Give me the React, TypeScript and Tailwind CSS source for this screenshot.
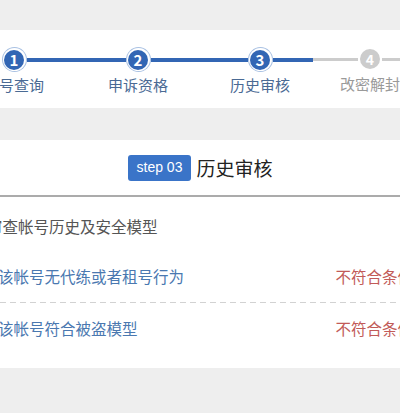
import type { ReactNode } from 'react';

const font = { fontFamily: '"Noto Sans CJK SC", "Noto Sans", sans-serif' };

type Step = { n: number; label: string; done: boolean };

const steps: Step[] = [
  { n: 1, label: '帐号查询', done: true },
  { n: 2, label: '申诉资格', done: true },
  { n: 3, label: '历史审核', done: true },
  { n: 4, label: '改密解封', done: false },
];

function Dot({ step }: { step: Step }) {
  if (!step.done) {
    return (
      <div className="w-[24px] h-[24px] flex items-center justify-center shrink-0">
        <div className="w-[20px] h-[20px] rounded-full bg-[#cccccc] text-white text-[14px] font-bold flex items-center justify-center leading-none">
          {step.n}
        </div>
      </div>
    );
  }
  return (
    <div className="w-[25px] h-[25px] rounded-full bg-[#a9c1e3] flex items-center justify-center shrink-0">
      <div className="w-[23px] h-[23px] rounded-full bg-white flex items-center justify-center">
        <div className="w-[20px] h-[20px] rounded-full bg-[#3266b4] text-white text-[15px] font-bold flex items-center justify-center leading-none">
          {step.n}
        </div>
      </div>
    </div>
  );
}

function Line({ color, className = '' }: { color: 'blue' | 'gray' | 'none'; className?: string }) {
  const c =
    color === 'blue' ? 'h-[4px] bg-[#3266b4]' : color === 'gray' ? 'h-[3px] bg-[#cccccc]' : 'h-[4px]';
  return <div className={`${c} ${className}`} />;
}

function StepCol({ step, width, left, right }: { step: Step; width: string; left: ReactNode; right: ReactNode }) {
  return (
    <div className={`${width} shrink-0 flex flex-col items-center`}>
      <div className="w-full flex items-center">
        <div className="flex-1 flex items-center">{left}</div>
        <Dot step={step} />
        <div className="flex-1 flex items-center">{right}</div>
      </div>
      <div
        className={`mt-[5px] text-[15px] leading-none whitespace-nowrap ${
          step.done ? 'text-[#4a6a94]' : 'text-[#9a9a9a]'
        }`}
      >
        {step.label}
      </div>
    </div>
  );
}

function Row({ text }: { text: string }) {
  return (
    <div className="h-[51px] ml-[-2px] w-[415px] flex items-center text-[15.5px] whitespace-nowrap">
      <span className="text-[#4a78b0]">{text}</span>
      <span className="ml-auto text-[#c25b58]">不符合条件</span>
    </div>
  );
}

export default function App() {
  return (
    <div className="w-[400px] h-[413px] bg-[#eeeeee] overflow-hidden" style={font}>
      <div className="h-[30px]" />

      <div className="h-[78px] bg-white overflow-hidden pt-[17px]">
        <div className="ml-[-48px] flex">
          <StepCol step={steps[0]} width="w-[124px]" left={<Line color="none" className="w-full" />} right={<Line color="blue" className="w-full" />} />
          <StepCol step={steps[1]} width="w-[124px]" left={<Line color="blue" className="w-full" />} right={<Line color="blue" className="w-full" />} />
          <StepCol
            step={steps[2]}
            width="w-[120px]"
            left={<Line color="blue" className="w-full" />}
            right={
              <>
                <Line color="blue" className="w-[40px]" />
                <Line color="gray" className="flex-1" />
              </>
            }
          />
          <StepCol step={steps[3]} width="w-[100px]" left={<Line color="gray" className="w-full" />} right={<Line color="gray" className="w-full" />} />
        </div>
      </div>

      <div className="h-[32px]" />

      <div className="h-[228px] bg-white overflow-hidden">
        <div className="h-[55px] flex items-center justify-center gap-[5px]">
          <span className="h-[26px] px-[9px] rounded-[3px] bg-[#3a74c8] text-white text-[14px] flex items-center" style={{ fontFamily: '"Liberation Sans", Arial, sans-serif' }}>
            step 03
          </span>
          <span className="text-[19px] text-[#222222] leading-none">历史审核</span>
        </div>
        <div className="h-[2px] bg-[#ababab]" />
        <div className="h-[54px] pt-[6px] flex items-center">
          <div className="ml-[-13px] text-[15.5px] text-[#555555] whitespace-nowrap">审查帐号历史及安全模型</div>
        </div>
        <Row text="该帐号无代练或者租号行为" />
        <div className="h-[1px] bg-[repeating-linear-gradient(90deg,#d2d2d2_0_6px,transparent_6px_10px)]" />
        <Row text="该帐号符合被盗模型" />
      </div>
    </div>
  );
}
